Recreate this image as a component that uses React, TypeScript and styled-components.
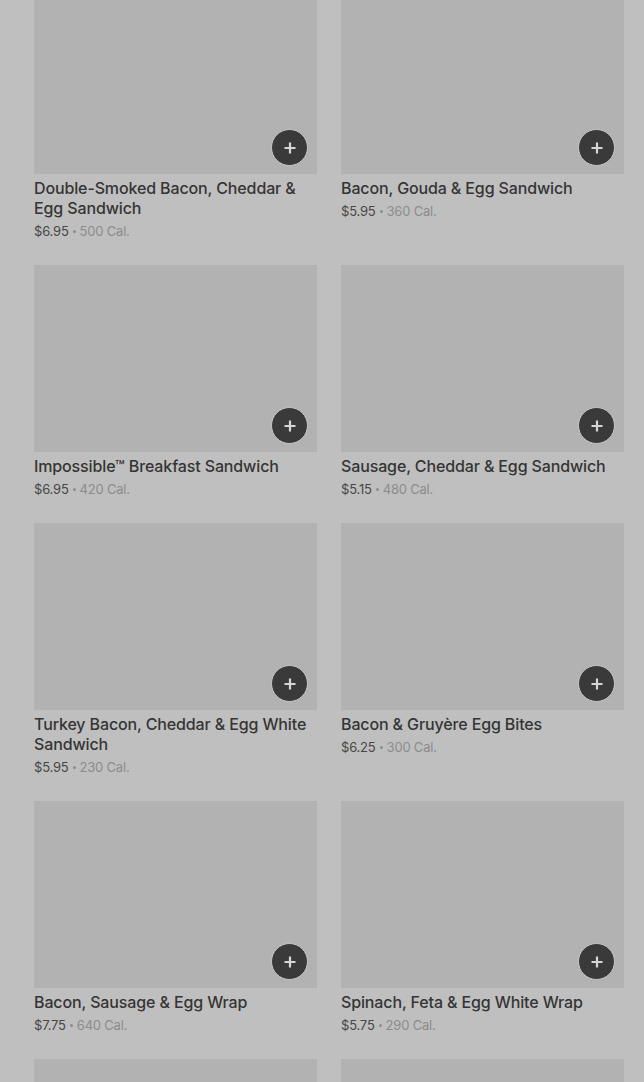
import React from "react";
import styled, { createGlobalStyle } from "styled-components";

const Global = createGlobalStyle`
  html, body { margin: 0; padding: 0; background: #bfbfbf; }
  body { font-family: Inter, "Noto Sans", "Liberation Sans", sans-serif; overflow: hidden; }
`;

const Page = styled.div`
  width: 644px;
  height: 1082px;
  overflow: hidden;
  background: #bfbfbf;
`;

const Grid = styled.div`
  display: grid;
  grid-template-columns: 283px 283px;
  column-gap: 24px;
  row-gap: 25px;
  padding: 0 20px 0 34px;
  margin-top: -13px;
`;

const Card = styled.div`
  display: flex;
  flex-direction: column;
`;

const Thumb = styled.div`
  position: relative;
  height: 187px;
  background: #b2b2b2;
`;

const AddButton = styled.button`
  position: absolute;
  right: 9px;
  bottom: 8px;
  width: 37px;
  height: 37px;
  border-radius: 50%;
  border: 1px solid #c9c9c9;
  background: #3a3a3a;
  color: #d6d6d6;
  display: flex;
  align-items: center;
  justify-content: center;
  padding: 0;
`;

const Title = styled.div`
  margin-top: 4px;
  font-size: 16px;
  line-height: 20px;
  font-weight: 500;
  color: #353535;
  letter-spacing: -0.13px;
`;

const Meta = styled.div`
  margin-top: 4px;
  height: 18px;
  display: flex;
  align-items: center;
  gap: 4px;
  font-size: 13px;
  line-height: 18px;
  color: #8c8c8c;
  letter-spacing: -0.2px;
`;

const Price = styled.span`
  color: #474747;
`;

const Dot = styled.span`
  width: 3px;
  height: 3px;
  border-radius: 50%;
  background: #8c8c8c;
  margin-top: 1px;
`;

const Plus = () => (
  <svg width="14" height="14" viewBox="0 0 14 14">
    <path d="M7 1.5v11M1.5 7h11" stroke="currentColor" strokeWidth="2.2" />
  </svg>
);

const items = [
  ["Double-Smoked Bacon, Cheddar & Egg Sandwich", "$6.95", "500 Cal."],
  ["Bacon, Gouda & Egg Sandwich", "$5.95", "360 Cal."],
  ["Impossible™ Breakfast Sandwich", "$6.95", "420 Cal."],
  ["Sausage, Cheddar & Egg Sandwich", "$5.15", "480 Cal."],
  ["Turkey Bacon, Cheddar & Egg White Sandwich", "$5.95", "230 Cal."],
  ["Bacon & Gruyère Egg Bites", "$6.25", "300 Cal."],
  ["Bacon, Sausage & Egg Wrap", "$7.75", "640 Cal."],
  ["Spinach, Feta & Egg White Wrap", "$5.75", "290 Cal."],
  ["", "", ""],
  ["", "", ""],
];

export default function App() {
  return (
    <Page>
      <Global />
      <Grid>
        {items.map(([name, price, cal], i) => (
          <Card key={i}>
            <Thumb>
              <AddButton aria-label="Add">
                <Plus />
              </AddButton>
            </Thumb>
            {name && <Title>{name}</Title>}
            {price && (
              <Meta>
                <Price>{price}</Price>
                <Dot />
                <span>{cal}</span>
              </Meta>
            )}
          </Card>
        ))}
      </Grid>
    </Page>
  );
}
